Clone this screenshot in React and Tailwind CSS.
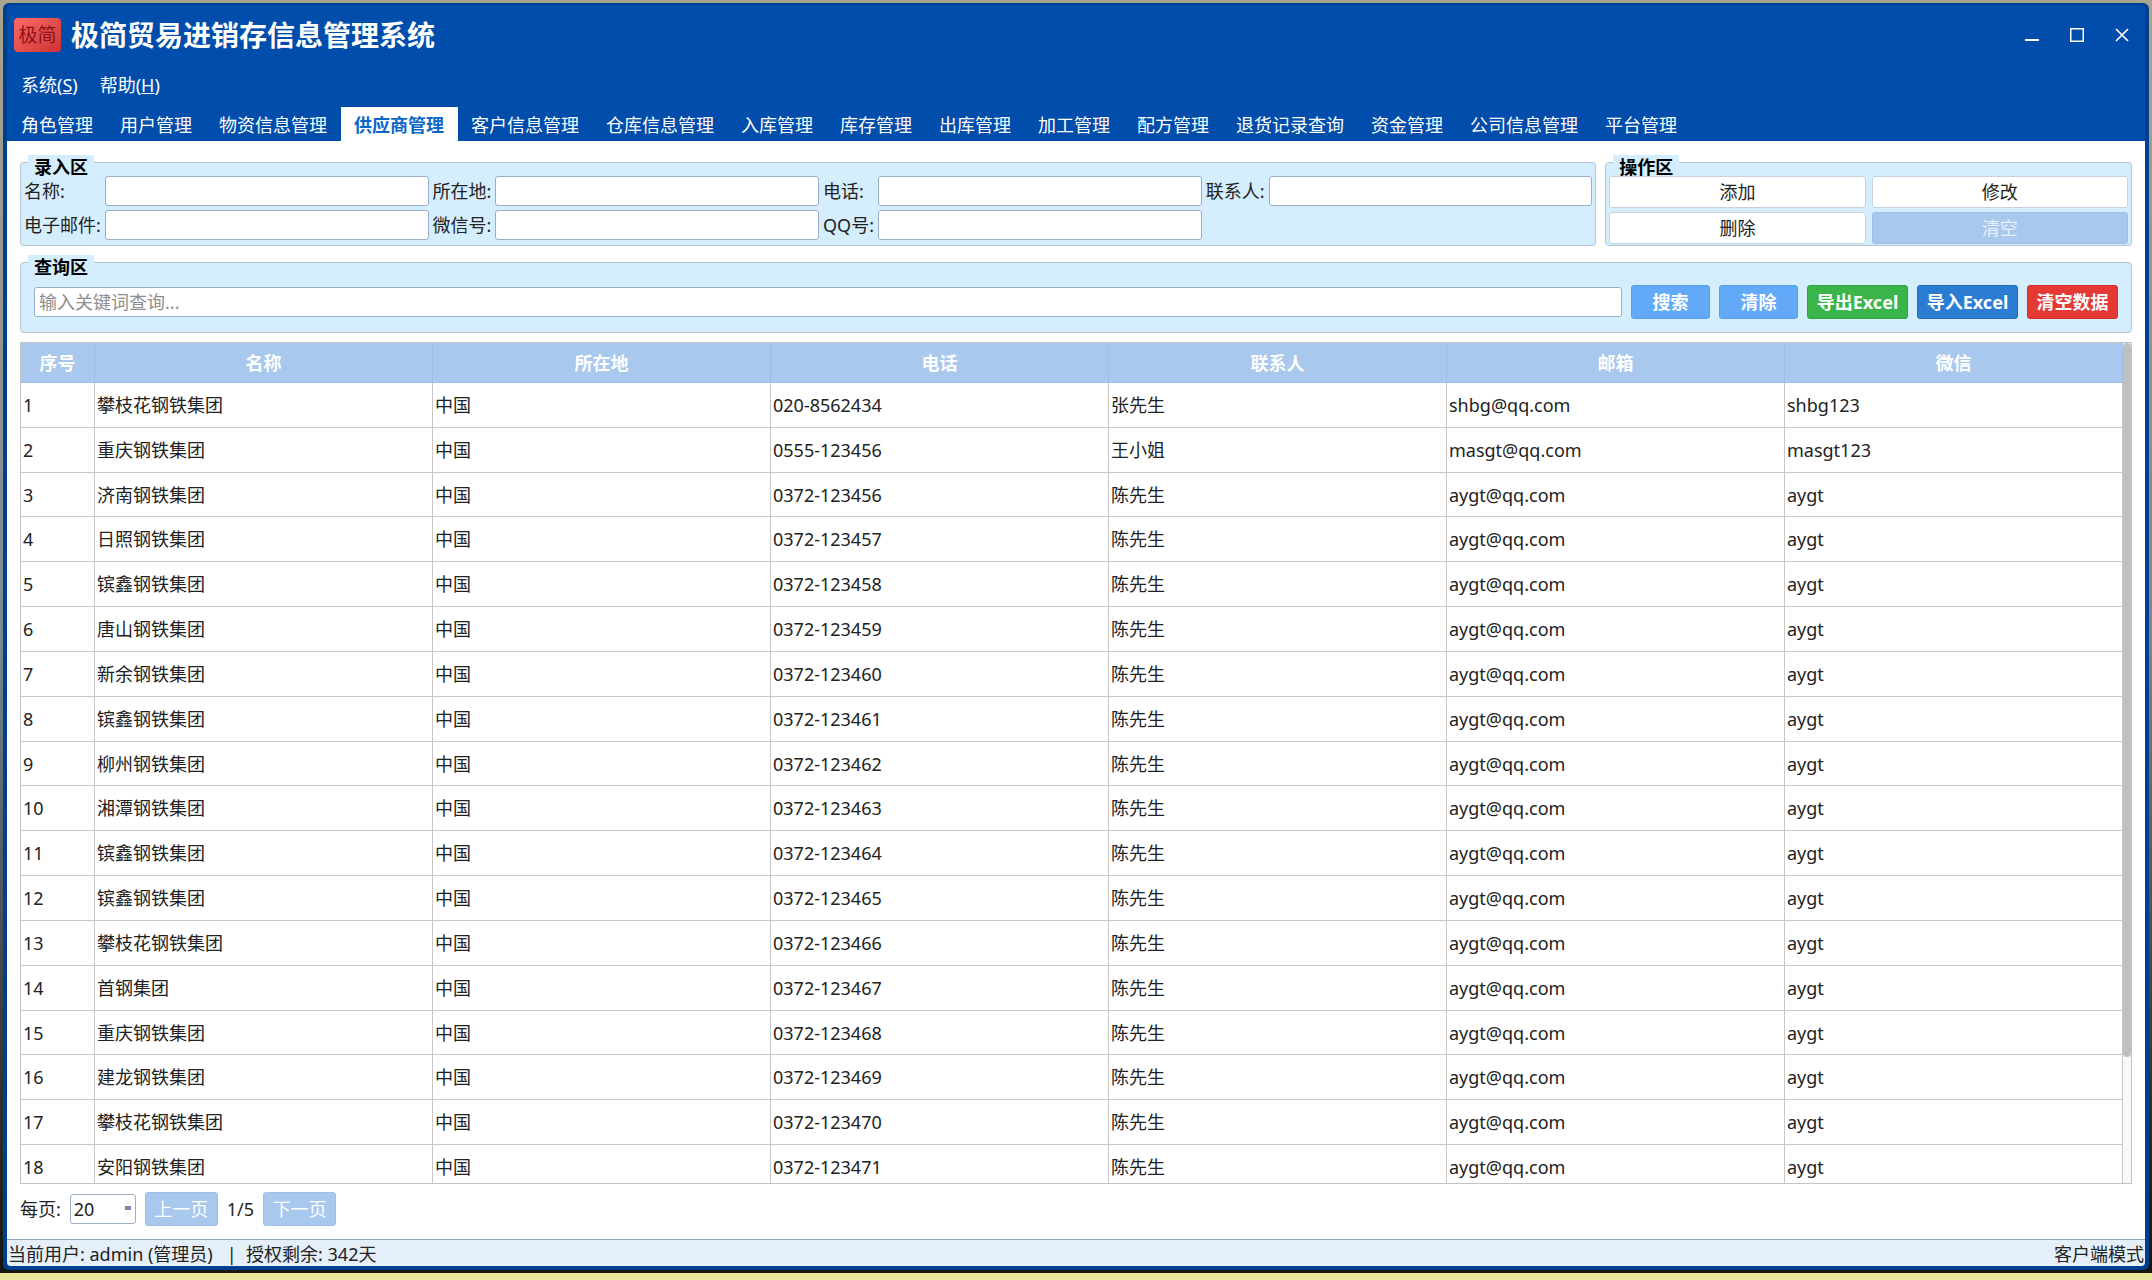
import React from 'react';

const tabs = [
  '角色管理', '用户管理', '物资信息管理', '供应商管理', '客户信息管理', '仓库信息管理', '入库管理', '库存管理',
  '出库管理', '加工管理', '配方管理', '退货记录查询', '资金管理', '公司信息管理', '平台管理',
];

const columns = ['序号', '名称', '所在地', '电话', '联系人', '邮箱', '微信'];

const names = [
  '济南钢铁集团', '日照钢铁集团', '镔鑫钢铁集团', '唐山钢铁集团', '新余钢铁集团', '镔鑫钢铁集团', '柳州钢铁集团', '湘潭钢铁集团',
  '镔鑫钢铁集团', '镔鑫钢铁集团', '攀枝花钢铁集团', '首钢集团', '重庆钢铁集团', '建龙钢铁集团', '攀枝花钢铁集团', '安阳钢铁集团',
];

const suppliers = [
  ['攀枝花钢铁集团', '中国', '020-8562434', '张先生', 'shbg@qq.com', 'shbg123'],
  ['重庆钢铁集团', '中国', '0555-123456', '王小姐', 'masgt@qq.com', 'masgt123'],
  ...names.map((name, i) => [name, '中国', `0372-${123456 + i}`, '陈先生', 'aygt@qq.com', 'aygt']),
];

const fields = [
  { id: 'name', label: '名称:' },
  { id: 'location', label: '所在地:' },
  { id: 'phone', label: '电话:' },
  { id: 'contact', label: '联系人:' },
  { id: 'email', label: '电子邮件:' },
  { id: 'wechat', label: '微信号:' },
  { id: 'qq', label: 'QQ号:' },
];

const inputClass =
  'h-[30px] w-full min-w-0 rounded-[3px] border border-[#9aadc8] bg-white px-1 outline-none focus:border-[#2a7bd1]';

function TitleBar() {
  return (
    <header className="flex h-[60px] items-center pl-[7px] pr-4 text-white">
      <div className="flex h-[34px] w-[47px] items-center justify-center rounded-[4px] bg-linear-to-br from-[#fb6b68] to-[#cf2f33] text-[19px] text-[#8b1218]">
        极简
      </div>
      <h1 className="ml-[10px] text-[28px] font-bold leading-none">极简贸易进销存信息管理系统</h1>
      <div className="ml-auto flex gap-[31px]">
        <button type="button" aria-label="最小化">
          <svg width="14" height="14" viewBox="0 0 14 14" stroke="currentColor" strokeWidth="2">
            <path d="M0 12h14" />
          </svg>
        </button>
        <button type="button" aria-label="最大化">
          <svg width="14" height="14" viewBox="0 0 14 14" fill="none" stroke="currentColor" strokeWidth="1.5">
            <path d="M.75.75h12.5v12.5H.75z" />
          </svg>
        </button>
        <button type="button" aria-label="关闭">
          <svg width="14" height="14" viewBox="0 0 14 14" stroke="currentColor" strokeWidth="1.7">
            <path d="M1 1l12 12M13 1L1 13" />
          </svg>
        </button>
      </div>
    </header>
  );
}

/** Group box whose title sits over its top border. */
function GroupBox({ title, className, children }) {
  return (
    <section aria-label={title} className={`relative rounded-[4px] border border-[#b4c3d0] bg-[#d5eefd] ${className}`}>
      <h2 className="absolute -top-2 left-[7px] h-[26px] bg-[#d5eefd] px-[6px] pt-[3px] font-bold leading-[18px] text-black">
        {title}
      </h2>
      {children}
    </section>
  );
}

function EntryForm() {
  return (
    <GroupBox title="录入区" className="flex-[3]">
      <form className="relative grid grid-cols-[auto_1fr_auto_1fr_auto_1fr_auto_1fr] items-center gap-x-1 gap-y-1 px-[3px] pb-[5px] pt-[13px]">
        {fields.map((f) => (
          <React.Fragment key={f.id}>
            <label htmlFor={f.id} className="whitespace-nowrap">{f.label}</label>
            <input id={f.id} type="text" className={inputClass} />
          </React.Fragment>
        ))}
      </form>
    </GroupBox>
  );
}

function Actions() {
  return (
    <GroupBox title="操作区" className="flex-1">
      <div className="relative grid grid-cols-2 gap-x-[6px] gap-y-1 px-[3px] pb-px pt-[13px]">
        {['添加', '修改', '删除'].map((label) => (
          <button key={label} type="button" className="h-8 rounded-[3px] border border-[#c6d3de] bg-white">
            {label}
          </button>
        ))}
        <button type="button" disabled className="h-8 rounded-[3px] border border-[#9fc0e6] bg-[#a8c8ee] text-[#e6f1fc]">
          清空
        </button>
      </div>
    </GroupBox>
  );
}

function SearchBar() {
  const base = 'h-[34px] shrink-0 rounded-[3px] border font-bold text-white';
  return (
    <GroupBox title="查询区" className="mt-4">
      <div className="flex items-center gap-[9px] px-[13px] pb-[13px] pt-[22px]">
        <input type="search" aria-label="关键词" placeholder="输入关键词查询..." className={`${inputClass} placeholder:text-[#8e8e8e]`} />
        <button type="button" className={`${base} w-[79px] border-[#559fee] bg-[#62aaf8]`}>搜索</button>
        <button type="button" className={`${base} w-[79px] border-[#559fee] bg-[#62aaf8]`}>清除</button>
        <button type="button" className={`${base} w-[101px] border-[#2fa33f] bg-[#3ab54a]`}>导出Excel</button>
        <button type="button" className={`${base} w-[101px] border-[#226cbd] bg-[#2b7cd3]`}>导入Excel</button>
        <button type="button" className={`${base} w-[91px] border-[#cf302d] bg-[#e53935]`}>清空数据</button>
      </div>
    </GroupBox>
  );
}

function SupplierTable() {
  return (
    <div className="mt-[9px] flex min-h-0 flex-1 overflow-hidden border border-[#c3c3c3]">
      <div className="min-w-0 flex-1 overflow-hidden">
        <table className="h-[847px] w-full table-fixed border-separate border-spacing-0">
          <thead>
            <tr className="h-10">
              {columns.map((c) => (
                <th key={c} scope="col" className="border-b border-r border-[#9dbfe5] bg-[#a8c8ee] font-bold leading-6 text-white first:w-[74px]">
                  {c}
                </th>
              ))}
            </tr>
          </thead>
          <tbody>
            {suppliers.map((row, i) => (
              <tr key={row[2]}>
                <td className="border-b border-r border-[#c8c8c8] px-[2px] leading-6">{i + 1}</td>
                {row.map((value, j) => (
                  <td key={columns[j + 1]} className="border-b border-r border-[#c8c8c8] px-[2px] leading-6">
                    {value}
                  </td>
                ))}
              </tr>
            ))}
          </tbody>
        </table>
      </div>
      <div className="w-2 bg-[#f8f8f8]">
        <div className="h-[85%] rounded-[4px] bg-[#bfbfbf]" />
      </div>
    </div>
  );
}

function Pager() {
  const pageButton = 'h-[34px] w-[73px] rounded-[3px] border border-[#9fc0e6] bg-[#a8c8ee] text-white';
  return (
    <nav aria-label="分页" className="flex items-center gap-[9px] pb-[13px] pt-2">
      <label htmlFor="page-size">每页:</label>
      <div className="relative">
        <select id="page-size" defaultValue="20" className="block h-[30px] w-[66px] appearance-none rounded-[3px] border border-[#9aadc8] bg-white pl-[3px]">
          <option>10</option>
          <option>20</option>
          <option>50</option>
        </select>
        <span className="pointer-events-none absolute right-[5px] top-3 h-1 w-[6px] bg-[#7186b0]" />
      </div>
      <button type="button" disabled className={pageButton}>上一页</button>
      <span>1/5</span>
      <button type="button" disabled className={pageButton}>下一页</button>
    </nav>
  );
}

export default function App() {
  return (
    <div className="flex h-screen flex-col border-b-[7px] border-[#e9e79c] bg-linear-to-b from-[#a9a58c] via-[#7d8790] to-[#14160f] pb-[3px] pl-[3px] pr-[3px] pt-[3px] font-['Noto_Sans','Noto_Sans_CJK_SC',sans-serif] text-[18px] leading-6 text-[#222]">
      <div className="flex min-h-0 flex-1 flex-col rounded-[6px] border-4 border-t-2 border-[#003f8f] bg-[#004dab]">
        <TitleBar />
        <nav aria-label="菜单" className="flex h-[42px] gap-[22px] pl-[14px] pt-2 text-white">
          <button type="button" className="h-6">系统(<u>S</u>)</button>
          <button type="button" className="h-6">帮助(<u>H</u>)</button>
        </nav>
        <div role="tablist" className="flex pl-px">
          {tabs.map((tab) => {
            const active = tab === '供应商管理';
            return (
              <button
                key={tab}
                type="button"
                role="tab"
                aria-selected={active}
                className={`h-[34px] whitespace-nowrap pl-[13px] pr-[14px] pt-[2px] ${active ? 'bg-white font-bold text-[#0a66c8]' : 'text-white'}`}
              >
                {tab}
              </button>
            );
          })}
        </div>
        <main className="flex min-h-0 flex-1 flex-col bg-white px-[13px] pt-[21px]">
          <div className="flex gap-[9px]">
            <EntryForm />
            <Actions />
          </div>
          <SearchBar />
          <SupplierTable />
          <Pager />
        </main>
        <footer className="flex h-[27px] items-center justify-between rounded-b-[4px] border-t border-[#8ea9c6] bg-[#e4eff9] px-px pt-px">
          <span className="whitespace-pre">当前用户: admin (管理员)   |  授权剩余: 342天</span>
          <span>客户端模式</span>
        </footer>
      </div>
    </div>
  );
}
